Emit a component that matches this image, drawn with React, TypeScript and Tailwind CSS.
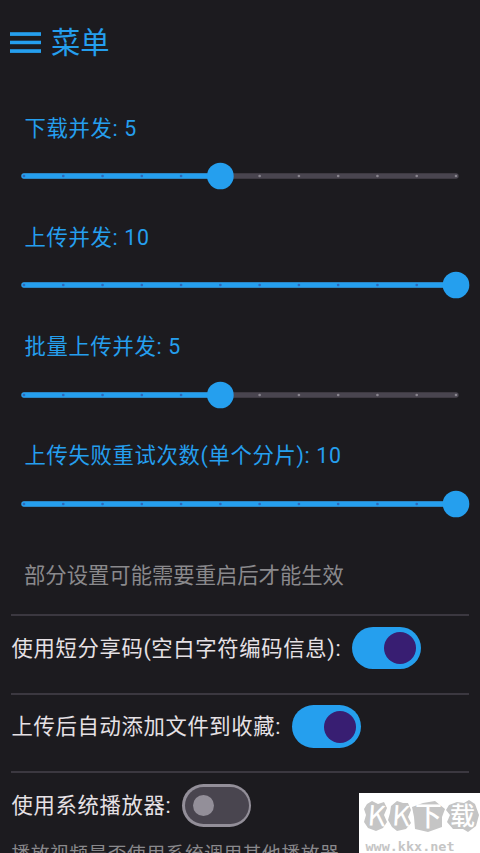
const STEPS = 12;

function SettingSlider({ label, index }: { label: string; index: number }) {
  const start = 24;
  const pitch = 432 / (STEPS - 1);
  const cx = start + pitch * index;
  return (
    <div className="h-[109.25px]">
      <div className="flex h-[32px] items-center pt-px pl-[24.5px] text-[21.33px] tracking-[0.67px] text-[#259fee]">{label}</div>
      <svg className="mt-[18px] block h-[28px] w-full" viewBox="0 0 480 28" role="slider" aria-label={label}>
        <line x1="24" x2="456" y1="14" y2="14" stroke="#49454f" strokeWidth="5.33" strokeLinecap="round" />
        <line x1="24" x2={cx} y1="14" y2="14" stroke="#259fee" strokeWidth="5.33" strokeLinecap="round" />
        {Array.from({ length: STEPS }, (_, i) => (
          <circle key={i} cx={start + pitch * i} cy="14" r="1.33" fill={i <= index ? "#2e68b8" : "#89858e"} />
        ))}
        <circle cx={cx} cy="14" r="13.33" fill="#259fee" />
      </svg>
    </div>
  );
}

function Toggle({ on }: { on: boolean }) {
  return on ? (
    <span className="flex h-[42.67px] w-[69.33px] items-center justify-end rounded-full bg-[#259fee] pr-[5.33px]">
      <span className="size-8 rounded-full bg-[#381e72]" />
    </span>
  ) : (
    <span className="flex h-[42.67px] w-[69.33px] items-center rounded-full bg-[#938f99] p-[2.67px]">
      <span className="flex h-full w-full items-center rounded-full bg-[#49454f] pl-[8px]">
        <span className="size-[21.33px] rounded-full bg-[#938f99]" />
      </span>
    </span>
  );
}

function ToggleRow({ label, on }: { label: string; on: boolean }) {
  return (
    <div className="flex h-[64px] items-center gap-[10.67px] pl-[11.4px] text-[21.33px] tracking-[0.67px] text-[#e6e1e5]">
      <span className="pt-px">{label}</span>
      <Toggle on={on} />
    </div>
  );
}

function Divider() {
  return (
    <svg className="block h-[2px] w-full" viewBox="0 0 480 2">
      <rect x="11" y="0.3" width="458" height="1.4" fill="#49454f" />
    </svg>
  );
}

function Watermark() {
  return (
    <svg className="absolute right-0 bottom-0 h-[60px] w-[121px]" viewBox="0 0 121 60">
      <rect width="121" height="60" fill="#fff" />
      <g fill="#c5c5c5">
        <path d="M8 11 L13 8 L19 11 L25 9 L28 15 L25 22 L28 29 L24 35 L17 38 L9 35 L5 29 L7 22 L5 16Z" />
        <path d="M32 13 L38 8 L44 10 L49 10 L52 17 L49 24 L52 30 L47 36 L38 38 L33 34 L29 27 L31 20Z" />
        <path d="M53 14 L64 10 L76 8 L86 16 L83 24 L83 34 L69 39 L56 36 L55 24Z" />
        <path d="M90 12 L98 9 L105 10 L110 7 L116 11 L120 22 L117 33 L109 39 L104 36 L94 36 L88 29 L91 22 L87 17Z" />
      </g>
      <g fill="#fff" className="font-['Noto_Sans_CJK_SC',sans-serif]">
        <text x="8.5" y="33" fontSize="28" transform="rotate(4 18 24)">K</text>
        <text x="33" y="33" fontSize="28" transform="rotate(4 42 24)">K</text>
        <text x="56" y="33" fontSize="27" fontWeight="500">下</text>
        <text x="91" y="32" fontSize="25" fontWeight="500">载</text>
      </g>
      <text x="6.5" y="57.5" fontSize="13" fontWeight="700" textLength="89" lengthAdjust="spacingAndGlyphs" fill="#c5c5c5" className="font-['DejaVu_Sans_Mono',monospace]">www.kkx.net</text>
    </svg>
  );
}

export default function App() {
  return (
    <div className="relative flex h-[853px] w-[480px] flex-col overflow-hidden whitespace-nowrap bg-[#1c1b1f] font-[Roboto,'Noto_Sans_CJK_SC',sans-serif]">
      <header className="flex h-[84px] shrink-0 items-center pl-[10px] text-[#259fee]">
        <svg className="h-[24px] w-[31px]" viewBox="0 0 31 24" fill="currentColor">
          <rect y="2.2" width="31" height="3.7" />
          <rect y="10.7" width="31" height="3.5" />
          <rect y="19.2" width="31" height="3.7" />
        </svg>
        <h1 className="ml-[10px] pt-[3px] text-[29.33px] leading-none">菜单</h1>
      </header>
      <main className="shrink-0 pt-7">
        <SettingSlider label="下载并发: 5" index={5} />
        <SettingSlider label="上传并发: 10" index={11} />
        <SettingSlider label="批量上传并发: 5" index={5} />
        <SettingSlider label="上传失败重试次数(单个分片): 10" index={11} />
        <p className="flex h-[65px] items-center pl-6 text-[21.33px] leading-none text-[#8a898c] pb-[12px]">部分设置可能需要重启后才能生效</p>
        <Divider />
        <div className="h-[76.7px]"><ToggleRow label="使用短分享码(空白字符编码信息):" on /></div>
        <Divider />
        <div className="h-[76.7px]"><ToggleRow label="上传后自动添加文件到收藏:" on /></div>
        <Divider />
        <ToggleRow label="使用系统播放器:" on={false} />
        <p className="mt-[4px] pl-[11.4px] text-[18.67px] tracking-[0.63px] leading-[27px] text-[#8a898c]">播放视频是否使用系统调用其他播放器</p>
      </main>
      <Watermark />
    </div>
  );
}
